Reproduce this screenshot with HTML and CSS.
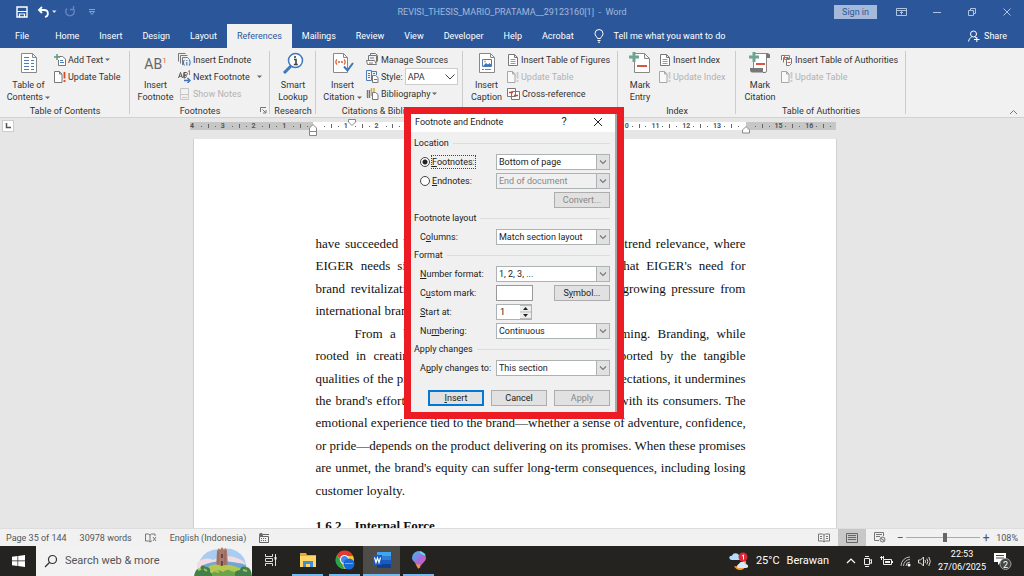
FILE: index.html
```html
<!DOCTYPE html>
<html lang="en">
<head>
<meta charset="utf-8">
<title>REVISI_THESIS_MARIO_PRATAMA__29123160[1] - Word</title>
<link rel="stylesheet" href="styles.css">
</head>
<body>
<svg class="defs" aria-hidden="true">
  <symbol id="page" viewBox="0 0 12 12"><path d="M1.5.5h6l3 3v8h-9zM7.500.5v3h3" fill="#fff" stroke="#777"/><path d="M3.500 5.500h5M3.500 7.500h5M3.500 9.500h5" stroke="#999"/></symbol>
  <symbol id="update" viewBox="0 0 12 12"><path d="M.5.5h5l2.500 2.500v8.500H.5zM5.500.5V3h2.500" fill="#fff" stroke="#777"/><path d="M10.500 1v6.500M10.500 9v2" stroke="currentColor" stroke-width="1.800"/></symbol>
  <symbol id="caret" viewBox="0 0 5 5"><path d="M0 1.500h5L2.500 4z" fill="#666"/></symbol>
  <symbol id="chev" viewBox="0 0 12 12"><path d="M3 4.500l3 3 3-3" fill="none" stroke="#777" stroke-width="1.100"/></symbol>
</svg>
<div class="app">
  <header class="titlebar">
    <div class="quick">
      <button aria-label="Save"><svg width="12" height="12" viewBox="0 0 12 12"><path d="M1 1h10v10H1z" fill="none" stroke="#fff" stroke-width="1.400"/><path d="M1 5.500h10M3.500 11V8h5v3" fill="none" stroke="#fff" stroke-width="1.200"/></svg></button>
      <button aria-label="Undo"><svg width="20" height="12" viewBox="0 0 20 12"><path d="M5 1L2 4l3 3M2 4h5c5 0 5 6 1 7" fill="none" stroke="#fff" stroke-width="1.800"/><path d="M15 4.500h4.500L17.200 7z" fill="#dce6f4"/></svg></button>
      <button aria-label="Repeat"><svg width="12" height="12" viewBox="0 0 12 12"><path d="M3 2.500a4.300 4.300 0 1 0 6 0M9.500 0v3.500H6" fill="none" stroke="#6486bd" stroke-width="1.400"/></svg></button>
      <button aria-label="Customize toolbar"><svg width="8" height="8" viewBox="0 0 8 8"><path d="M1 1.500h6M1.500 3.500h5L4 6.500z" fill="none" stroke="#87a2ce"/></svg></button>
    </div>
    <div class="doc-title">REVISI_THESIS_MARIO_PRATAMA__29123160[1]&nbsp; -&nbsp; Word</div>
    <div class="window-tools">
      <button class="signin">Sign in</button>
      <button aria-label="Ribbon display"><svg width="11" height="10" viewBox="0 0 11 10"><path d="M.5 1.500h10v7H.5zM.5 3.500h10M5.500 7.500V4.500M4 6l1.500-1.500L7 6" fill="none" stroke="#b0c3e2"/></svg></button>
      <button aria-label="Minimize"><svg width="10" height="10" viewBox="0 0 10 10"><path d="M1 5.500h8" stroke="#b0c3e2"/></svg></button>
      <button aria-label="Restore"><svg width="10" height="10" viewBox="0 0 10 10"><path d="M1.500 3.500h5v5h-5zM3.500 3V1.500h5v5H7" fill="none" stroke="#b0c3e2"/></svg></button>
      <button aria-label="Close"><svg width="10" height="10" viewBox="0 0 10 10"><path d="M1.500 1.500l7 7M8.500 1.500l-7 7" stroke="#b0c3e2"/></svg></button>
    </div>
  </header>
  <nav class="tabs">
    <a href="#" class="file">File</a><a href="#">Home</a><a href="#">Insert</a><a href="#">Design</a><a href="#">Layout</a><a href="#" class="active">References</a><a href="#">Mailings</a><a href="#">Review</a><a href="#">View</a><a href="#">Developer</a><a href="#">Help</a><a href="#">Acrobat</a>
    <a href="#" class="tell"><svg width="10" height="14" viewBox="0 0 10 14"><path d="M3.500 9.500C3 7.500 1 7 1 4.500a4 4 0 0 1 8 0C9 7 7 7.500 6.500 9.500zM3.500 11.500h3M4 13.200h2" fill="none" stroke="#fff"/></svg>Tell me what you want to do</a>
    <a href="#" class="share"><svg width="12" height="12" viewBox="0 0 12 12"><circle cx="5.500" cy="4" r="3" fill="none" stroke="#fff"/><path d="M.5 11.500C1 9 2 8 3.500 7M7 7l2 1.500M6 9.500h5.500M8.800 7v5" fill="none" stroke="#fff"/></svg>Share</a>
  </nav>
  <div class="ribbon">
    <section class="group g-toc">
      <div class="tools">
        <button class="big"><svg width="18" height="22" viewBox="0 0 18 22"><path d="M1.500 1.500h11l4 4v15h-15zM12.500 1.500v4h4" fill="#fff" stroke="#888"/><path d="M4 5.500h5M4 8.500h5M4 11.500h5M4 14.500h5M4 17.500h5" stroke="#4a7ebb"/><path d="M11 8.500h3M11 11.500h3M11 14.500h3M11 17.500h3" stroke="#4a7ebb"/></svg><span>Table of<br>Contents <svg class="caret"><use href="#caret"/></svg></span></button>
        <div class="stack">
          <button><svg width="12" height="12" viewBox="0 0 12 12"><path d="M4.500 3V2.500h4l3 2.500v6.500h-7V6" fill="#fff" stroke="#777"/><path d="M3 0v6M0 3h6" stroke="#5a9a82" stroke-width="1.500"/><path d="M6 6.500h3M6 8.500h4" stroke="#4a7ebb"/></svg>Add Text <svg class="caret"><use href="#caret"/></svg></button>
          <button><svg class="ic red"><use href="#update"/></svg>Update Table</button>
        </div>
      </div>
      <h2>Table of Contents</h2>
    </section>
    <section class="group g-foot">
      <div class="tools">
        <button class="big"><span class="ab">AB<sup>1</sup></span><span>Insert<br>Footnote</span></button>
        <div class="stack">
          <button><svg width="13" height="13" viewBox="0 0 13 13"><path d="M.5 8.500v-8h7M2.500 10.500v-8h7M4.500 12V4.500h5l2 2" fill="none" stroke="#777"/><path d="M6.500 7C5 8 5 11 6.500 12.500M11 7c1.500 1 1.500 4 0 5.500M8.800 9v3.500M8.800 7v1" fill="none" stroke="#4a7ebb" stroke-width="1.200"/></svg>Insert Endnote</button>
          <button><svg width="13" height="13" viewBox="0 0 13 13"><path d="M.5 8l2-5.500 2 5.500M1.200 6.200h2.600M6 2.500h2c2 0 2 2.500 0 2.500H6c3 0 3 3 0 3zV8" fill="none" stroke="#555"/><path d="M10 1.500l1.500-1V5" fill="none" stroke="#dc6a32"/><path d="M6 10.500h5M9.500 8l2.500 2.500L9.500 13" fill="none" stroke="#3c73b9" stroke-width="1.400"/></svg>Next Footnote <svg class="caret far"><use href="#caret"/></svg></button>
          <button disabled><svg width="13" height="12" viewBox="0 0 13 12"><path d="M2.500.5h8v11h-8zM2.500 6.500h8M4 9.500h5" fill="none" stroke="#aaa"/></svg>Show Notes</button>
        </div>
      </div>
      <h2>Footnotes</h2>
      <button class="launcher" aria-label="Footnote and Endnote settings"><svg width="7" height="7" viewBox="0 0 7 7"><path d="M.5 5V.5H6M2.500 2.500l3 3M6 3v3H3" fill="none" stroke="#777"/></svg></button>
    </section>
    <section class="group g-res">
      <div class="tools">
        <button class="big"><svg width="22" height="22" viewBox="0 0 22 22"><path d="M9 14l-7 7" stroke="#3f78bd" stroke-width="3"/><circle cx="13.500" cy="8.500" r="7" fill="#fff" stroke="#3f78bd" stroke-width="1.500"/><path d="M12 7.500h2v5M11.800 12.500h4M13 4v2" fill="none" stroke="#444" stroke-width="1.600"/></svg><span>Smart<br>Lookup</span></button>
      </div>
      <h2>Research</h2>
    </section>
    <section class="group g-cit">
      <div class="tools">
        <button class="big"><svg width="22" height="22" viewBox="0 0 22 22"><path d="M1.500 1.500h10l4 4v15h-14zM11.500 1.500v4h4" fill="#fff" stroke="#888"/><path d="M5 7.500c-1.500 1-1.500 4 0 5M12 7.500c1.500 1 1.500 4 0 5M6 10h2M9 10h2" fill="none" stroke="#dc5a32" stroke-width="1.300"/><path d="M12 14.500l3.500 4L21 11" fill="none" stroke="#3c73b9" stroke-width="2"/></svg><span>Insert<br>Citation <svg class="caret"><use href="#caret"/></svg></span></button>
        <div class="stack">
          <button><svg width="13" height="13" viewBox="0 0 13 13"><path d="M2.500 7V2.500h8v7M4.500 2V.5h5l2 2v6" fill="none" stroke="#777"/><path d="M.5 7.500h8l2 4h-9zM4 5h4" fill="#fff" stroke="#777"/><path d="M3 10h4" stroke="#777"/></svg>Manage Sources</button>
          <div class="style-row"><label for="style"><svg width="13" height="13" viewBox="0 0 13 13"><path d="M.5.5h5v10h-5zM5.500 1.500h5V5" fill="none" stroke="#4a7ebb"/><path d="M2 3.500h2M2 5.500h2M2 7.500h2M7 3.500h2" stroke="#4a7ebb"/><path d="M6.500 5.500h3l2.500 2v5H6.500z" fill="#fff" stroke="#777"/><path d="M8 9.500h3" stroke="#4a7ebb"/></svg>Style:</label><span class="combo"><select id="style"><option>APA</option></select><svg viewBox="0 0 14 14"><path d="M2.500 4.500L7 9l4.500-4.500" fill="none" stroke="#444"/></svg></span></div>
          <button><svg width="13" height="13" viewBox="0 0 13 13"><path d="M1.500 3v8M3.500 3v8" stroke="#777" stroke-width="1.400"/><path d="M5.500 1v8M8 1v4" stroke="#d9ad57" stroke-width="1.600"/><path d="M6.500 5.500h3l2.500 2v5H6.500z" fill="#fff" stroke="#777"/></svg>Bibliography <svg class="caret"><use href="#caret"/></svg></button>
        </div>
      </div>
      <h2>Citations &amp; Bibliography</h2>
    </section>
    <section class="group g-cap">
      <div class="tools">
        <button class="big"><svg width="18" height="22" viewBox="0 0 18 22"><path d="M1.500 1.500h11l4 4v15h-15zM12.500 1.500v4h4" fill="#fff" stroke="#888"/><path d="M4.500 7.500h9v7h-9z" fill="#fff" stroke="#4a7ebb"/><path d="M5 14l3-3 2 1.500 1.500-1.500 2 2v1z" fill="#3c73b9"/><circle cx="7" cy="9.500" r="1" fill="#e8a33d"/><path d="M4 17.500h2M7 17.500h6" stroke="#dc5a46"/></svg><span>Insert<br>Caption</span></button>
        <div class="stack">
          <button><svg class="ic"><use href="#page"/></svg>Insert Table of Figures</button>
          <button disabled><svg class="ic"><use href="#update"/></svg>Update Table</button>
          <button><svg width="13" height="12" viewBox="0 0 13 12"><path d="M.5.5h8v8h-8zM4.500 3.500h8v8h-8z" fill="#fff" stroke="#777"/><path d="M2 4.500h4M7 7.500h4" stroke="#d8412c" stroke-width="1.600"/></svg>Cross-reference</button>
        </div>
      </div>
      <h2>Captions</h2>
    </section>
    <section class="group g-idx">
      <div class="tools">
        <button class="big"><svg width="22" height="22" viewBox="0 0 22 22"><path d="M5.500 1.500h10l5 5v14h-15zM15.500 1.500v5h5" fill="#fff" stroke="#888"/><path d="M8 14h10" stroke="#d8553f" stroke-width="2"/><path d="M5 0v10M0 5h10" stroke="#6ea592" stroke-width="3"/></svg><span>Mark<br>Entry</span></button>
        <div class="stack">
          <button><svg class="ic"><use href="#page"/></svg>Insert Index</button>
          <button disabled><svg class="ic"><use href="#update"/></svg>Update Index</button>
        </div>
      </div>
      <h2>Index</h2>
    </section>
    <section class="group g-auth">
      <div class="tools">
        <button class="big"><svg width="22" height="22" viewBox="0 0 22 22"><path d="M5 2h13v17H5z" fill="#fff"/><path d="M4.500 16V1.500H19M17.500 2v17" fill="none" stroke="#888"/><path d="M17 6V3c0-2 4-2 4 0v3zM1 16h13v4.500H3c-2 0-2-3-2-4.500z" fill="#777"/><path d="M14 20.500h2c1.500 0 1.500-1 1.500-2" stroke="#777" fill="none"/><path d="M7 12h9" stroke="#d8553f" stroke-width="2"/><path d="M5 0v10M0 5h10" stroke="#6ea592" stroke-width="3"/></svg><span>Mark<br>Citation</span></button>
        <div class="stack">
          <button><svg width="12" height="12" viewBox="0 0 12 12"><path d="M.5 6V1.500h7M2.500 8.500v-5h5M5.500 4.500h5v5l-2 2h-3z" fill="#fff" stroke="#777"/><path d="M3.500 1.500h5v4h-5zM6.500 8.500h3" fill="none" stroke="#c96a4e"/></svg>Insert Table of Authorities</button>
          <button disabled><svg class="ic"><use href="#update"/></svg>Update Table</button>
        </div>
      </div>
      <h2>Table of Authorities</h2>
    </section>
    <button class="collapse" aria-label="Collapse the ribbon"><svg width="9" height="6" viewBox="0 0 9 6"><path d="M1 5l3.500-3.500L8 5" fill="none" stroke="#777"/></svg></button>
  </div>
  <div class="ruler-bar">
    <button class="tab-stop" aria-label="Left tab"><svg width="6" height="6" viewBox="0 0 6 6"><path d="M1.500 0v4.500H6" fill="none" stroke="#555" stroke-width="1.500"/></svg></button>
    <div class="ruler">
      <div><b>4</b><i></i><s></s><i></i></div><div><b>3</b><i></i><s></s><i></i></div><div><b>2</b><i></i><s></s><i></i></div><div><b>1</b><i></i><s></s><i></i></div><div><b></b><i></i><s></s><i></i></div><div><b>1</b><i></i><s></s><i></i></div><div><b>2</b><i></i><s></s><i></i></div><div><b>3</b><i></i><s></s><i></i></div><div><b>4</b><i></i><s></s><i></i></div><div><b>5</b><i></i><s></s><i></i></div><div><b>6</b><i></i><s></s><i></i></div><div><b>7</b><i></i><s></s><i></i></div><div><b>8</b><i></i><s></s><i></i></div><div><b>9</b><i></i><s></s><i></i></div><div><b>10</b><i></i><s></s><i></i></div><div><b>11</b><i></i><s></s><i></i></div><div><b>12</b><i></i><s></s><i></i></div><div><b>13</b><i></i><s></s><i></i></div><div><b></b><i></i><s></s><i></i></div><div><b>15</b><i></i><s></s><i></i></div><div><b>16</b><i></i><s></s><i></i></div>
      <svg class="mark first" viewBox="0 0 8 8"><path d="M.5.5h7V3L4 6.500.5 3z" fill="#fff" stroke="#888"/></svg>
      <svg class="mark left" viewBox="0 0 8 12"><path d="M4 .5L7.500 4v7.500h-7V4zM.5 7.500h7" fill="#fff" stroke="#888"/></svg>
      <svg class="mark right" viewBox="0 0 8 8"><path d="M4 .5L7.500 4v3h-7V4z" fill="#fff" stroke="#888"/></svg>
    </div>
  </div>
  <main class="desk">
    <article class="sheet">
      <p>
        <span>have succeeded by combining their functional value and trend relevance, where</span>
        <span>EIGER needs significant improvement. This suggests that EIGER's need for</span>
        <span>brand revitalization is becoming urgent amid all of the growing pressure from</span>
        <span class="last">international brands that now enter the local industry.</span>
      </p>
      <p>
        <span class="indent">From a branding perspective, this is truly alarming. Branding, while</span>
        <span>rooted in creating emotional connection, must be supported by the tangible</span>
        <span>qualities of the product. If the quality fails to meet the expectations, it undermines</span>
        <span>the brand's efforts to build deep and lasting relationships with its consumers. The</span>
        <span>emotional experience tied to the brand—whether a sense of adventure, confidence,</span>
        <span>or pride—depends on the product delivering on its promises. When these promises</span>
        <span>are unmet, the brand's equity can suffer long-term consequences, including losing</span>
        <span class="last">customer loyalty.</span>
      </p>
      <h1><span>1.6.2</span>Internal Force</h1>
    </article>
  </main>
  <footer class="status">
    <span>Page 35 of 144</span><span>30978 words</span>
    <svg width="12" height="10" viewBox="0 0 12 10"><path d="M.5 1h3L5 2v7L3.500 8h-3zM5 2l1.500-1H10v2M5 9l1.500-1H7M8 4l3 4M11 4L8 8" fill="none" stroke="#777"/></svg>
    <span>English (Indonesia)</span>
    <svg width="10" height="10" viewBox="0 0 10 10"><path d="M.5 3.500h9v6h-9zM4 1.500h6" fill="none" stroke="#666"/><circle cx="2" cy="2" r="2" fill="#666"/><path d="M2 5.500h6M2 7.500h6" stroke="#666" stroke-dasharray="1 1"/></svg>
    <div class="views">
      <button aria-label="Read mode"><svg width="12" height="10" viewBox="0 0 12 10"><path d="M.5 1h4L6 2v7L4.500 8h-4zM6 2l1.500-1h4v7h-4L6 9M2 3.500h2M2 5.500h2M8 3.500h2M8 5.500h2" fill="none" stroke="#777"/></svg></button>
      <button class="on" aria-label="Print layout"><svg width="12" height="10" viewBox="0 0 12 10"><path d="M.5.5h11v9H.5zM2 2.500h8M2 4.500h8M2 6.500h8" fill="none" stroke="#666"/></svg></button>
      <button aria-label="Web layout"><svg width="12" height="11" viewBox="0 0 12 11"><path d="M5 8.500H.5v-8h9V4M2 2.500h6M2 4.500h4" fill="none" stroke="#777"/><circle cx="8.500" cy="7.500" r="2.500" fill="#ddd" stroke="#777"/><path d="M6.500 6l4 3" stroke="#777"/></svg></button>
      <button class="zoom-step" aria-label="Zoom out">−</button>
      <input type="range" aria-label="Zoom" min="0" max="200" value="104">
      <button class="zoom-step" aria-label="Zoom in">+</button>
      <span class="percent">108%</span>
    </div>
  </footer>
  <div class="taskbar">
    <button class="start" aria-label="Start"><svg width="13" height="12" viewBox="0 0 13 12"><path d="M0 1.800L5.500 1v4.600H0zM6.200.9L13 0v5.600H6.200zM0 6.300h5.500V11L0 10.200zM6.200 6.300H13V12l-6.800-.9z" fill="#fff"/></svg></button>
    <label class="search">
      <svg width="14" height="14" viewBox="0 0 14 14"><circle cx="8.500" cy="5.500" r="4" fill="none" stroke="#333" stroke-width="1.200"/><path d="M5.700 8.300L1 13" stroke="#333" stroke-width="1.300"/></svg>
      <input type="text" placeholder="Search web &amp; more" aria-label="Search web &amp; more">
      <svg class="scene" width="58" height="30" viewBox="0 0 58 30"><path d="M6 14Q12 3 26 3q16-3 24 9l4 12H3z" fill="#a9cdf0"/><path d="M3 17q8-7 16-3 16-8 30 1l4 5v6H3z" fill="#f4dbe1"/><path d="M7 20q18-9 45-1v7H7z" fill="#6ba8d4"/><path d="M22 22L23 5l2-3 1 2 2-3 2 3 1-2 2 2 1 18z" fill="#aa7968"/><path d="M24 5v15M31 5v17" stroke="#8d665c"/><path d="M27 8h2v4h-2zM27 15h2v7h-2z" fill="#67434b"/><path d="M12 23q7-7 15-3 9-3 20 3l5 6H10z" fill="#b8c84f"/><path d="M0 30q2-9 6-7 1-6 6-2 5 0 4 5l5 4zM58 30q-1-9-6-9-5-2-6 3-5 0-8 6z" fill="#437f4b"/><path d="M18 27q6-5 11-1 6-5 12 1v3H18z" fill="#6ca24a"/><path d="M4 24l3-1M10 23l3 2M49 24l4 1M21 25l4 1M36 24l5 1" stroke="#9ec45d" stroke-width="2"/></svg>
    </label>
    <button class="app-btn plain" aria-label="Task view"><svg width="14" height="14" viewBox="0 0 14 14"><path d="M1.500 1v2.500h7V1M1.500 13v-2.500h7V13M1.500 5.500h7v3h-7zM11.500 1v12" fill="none" stroke="#ddd"/><path d="M10.500 4h2v2.500h-2z" fill="#fff"/></svg></button>
    <button class="app-btn" aria-label="File Explorer"><svg width="18" height="16" viewBox="0 0 18 16"><path d="M1 1h6l1 2h9v12H1z" fill="#e8a92e"/><path d="M1 4h16v11H1z" fill="#ffd566"/><path d="M4 15V9h10v6h-3v-3H7v3z" fill="#3f8fd2"/></svg></button>
    <button class="app-btn" aria-label="Chrome"><svg width="20" height="20" viewBox="0 0 20 20"><circle cx="10" cy="10" r="9" fill="#f7c52c"/><path d="M2 5a9 9 0 0 1 16 1h-8L6 11z" fill="#e33c2e"/><path d="M2 5l4.500 8 3 6A9 9 0 0 1 2 5z" fill="#2ba24c"/><circle cx="9.500" cy="9.500" r="4.500" fill="#fff"/><circle cx="9.500" cy="9.500" r="3.500" fill="#4285f4"/><circle cx="14" cy="14" r="5.500" fill="#1769d8"/><path d="M10 13.500h8" stroke="#7da9e8"/></svg></button>
    <button class="app-btn current" aria-label="Word"><svg width="20" height="18" viewBox="0 0 20 18"><path d="M5 1h14v4H5z" fill="#41a5ee"/><path d="M5 5h14v4H5z" fill="#2b7cd3"/><path d="M5 9h14v4H5z" fill="#185abd"/><path d="M5 13h14v4H5z" fill="#103f91"/><path d="M1 4h9v10H1z" fill="#185abd"/><path d="M2.500 6.500l1.500 5 1.500-4.500L7 11.500l1.500-5" fill="none" stroke="#fff" stroke-width="1.200"/></svg></button>
    <button class="app-btn" aria-label="Paint"><svg width="16" height="20" viewBox="0 0 16 20"><defs><linearGradient id="pin" x1="0" y1="0" x2="1" y2="1"><stop offset="0" stop-color="#26c9ef"/><stop offset=".5" stop-color="#a56be0"/><stop offset="1" stop-color="#f0567b"/></linearGradient></defs><path d="M8 1a7 7 0 0 1 7 7c0 4-5 5-6 10H7c0-5-6-6-6-10a7 7 0 0 1 7-7z" fill="url(#pin)"/><path d="M4 13l3 2 2-1-1 4.500H7z" fill="#f59b3c"/><path d="M9 2l5 3" stroke="#58e4e1" stroke-width="2"/></svg></button>
    <div class="tray">
      <svg width="20" height="18" viewBox="0 0 20 18"><path d="M5 14a7 7 0 0 0 9-8c6 4 3 12-3 12-3 0-5-2-6-4z" fill="#f59c2f"/><path d="M3 8C-1 8 0 3 3 4c1-4 7-3 7 0 3 0 2 4 0 4z" fill="#b8dcfb"/><path d="M10 16c-3 0-2-4 0-4 1-3 6-3 6 0 4 0 4 4 1 4z" fill="#d7eaff"/><circle cx="14" cy="5" r="4.500" fill="#d92b35"/><path d="M13 4l1.500-1v4.500" fill="none" stroke="#fff"/></svg>
      <span class="weather">25°C</span><span class="weather city">Berawan</span>
      <svg width="10" height="8" viewBox="0 0 10 8"><path d="M1 6l4-4 4 4" fill="none" stroke="#fff" stroke-width="1.200"/></svg>
      <svg width="10" height="13" viewBox="0 0 10 13"><path d="M1.500 3.500h5v6h-5zM6.500 5.500l2-1v4l-2-1M2 1.500h4M2 11.500h4" fill="none" stroke="#eee"/></svg>
      <svg width="13" height="11" viewBox="0 0 13 11"><path d="M3.500 3.500h8v5h-8zM0 1.500h4M1.500 0v4M3.500 0v3" fill="none" stroke="#eee"/><path d="M5 5h5v2H5zM12 5h1v2h-1z" fill="#eee"/></svg>
      <svg width="11" height="11" viewBox="0 0 11 11"><path d="M1 10A9 9 0 0 1 10 1M3.500 10A6.500 6.500 0 0 1 10 3.500M6 10a4 4 0 0 1 4-4" fill="none" stroke="#bbb"/><circle cx="9" cy="9" r="1.500" fill="#fff"/></svg>
      <svg width="13" height="11" viewBox="0 0 13 11"><path d="M.5 4h2L5.500 1v9l-3-3h-2zM7 4q1 1.500 0 3M8.800 2.500q2 3 0 6M10.800 1q3 4.500 0 9" fill="none" stroke="#ddd"/></svg>
      <time>22:53<br>27/06/2025</time>
      <svg class="notice" width="20" height="20" viewBox="0 0 20 20"><path d="M1 2h12v9H8l-3 3v-3H1z" fill="#fff"/><path d="M3 4.500h8M3 7h8" stroke="#444"/><circle cx="12.500" cy="13" r="5.500" fill="#444" stroke="#999"/><text x="12.500" y="16.500" text-anchor="middle">2</text></svg>
    </div>
  </div>

  <form class="dialog" role="dialog" aria-label="Footnote and Endnote">
    <div class="dialog-title"><span>Footnote and Endnote</span><button type="button" class="help">?</button><button type="button" aria-label="Close"><svg width="10" height="10" viewBox="0 0 10 10"><path d="M1 1l8 8M9 1L1 9" stroke="#222"/></svg></button></div>
    <div class="dialog-body">
      <h3>Location</h3>
      <div class="row"><span class="choice"><input type="radio" name="kind" id="foot" checked><label for="foot" class="focus"><u>F</u>ootnotes:</label></span><span class="drop"><select aria-label="Footnote location"><option>Bottom of page</option></select><svg><use href="#chev"/></svg></span></div>
      <div class="row"><span class="choice"><input type="radio" name="kind" id="end"><label for="end"><u>E</u>ndnotes:</label></span><span class="drop off"><select aria-label="Endnote location" disabled><option>End of document</option></select><svg><use href="#chev"/></svg></span></div>
      <div class="row"><button type="button" class="btn" disabled>Convert...</button></div>
      <h3>Footnote layout</h3>
      <div class="row"><label for="cols">C<u>o</u>lumns:</label><span class="drop"><select id="cols"><option>Match section layout</option></select><svg><use href="#chev"/></svg></span></div>
      <h3>Format</h3>
      <div class="row"><label for="numf"><u>N</u>umber format:</label><span class="drop"><select id="numf"><option>1, 2, 3, ...</option></select><svg><use href="#chev"/></svg></span></div>
      <div class="row"><label for="mark">C<u>u</u>stom mark:</label><input type="text" id="mark" class="box"><button type="button" class="btn">S<u>y</u>mbol...</button></div>
      <div class="row"><label for="start"><u>S</u>tart at:</label><span class="spin"><input type="text" id="start" value="1"><svg viewBox="0 0 11 14"><path d="M0 .5h11M0 7h11M0 13.500h11" stroke="#bbb"/><path d="M3 5l2.500-3L8 5zM3 9l2.500 3L8 9z" fill="#222"/></svg></span></div>
      <div class="row"><label for="numb">Nu<u>m</u>bering:</label><span class="drop"><select id="numb"><option>Continuous</option></select><svg><use href="#chev"/></svg></span></div>
      <h3>Apply changes</h3>
      <div class="row"><label for="appl">A<u>p</u>ply changes to:</label><span class="drop"><select id="appl"><option>This section</option></select><svg><use href="#chev"/></svg></span></div>
      <div class="actions"><button type="button" class="btn primary"><u>I</u>nsert</button><button type="button" class="btn">Cancel</button><button type="button" class="btn" disabled>Apply</button></div>
    </div>
  </form>
</div>
</body>
</html>
```
FILE: styles.css
```css
* { box-sizing: border-box; }
body { margin: 0; font: 9px/12px Roboto, "Open Sans", sans-serif; color: #333; }
button, input, select { font: inherit; color: inherit; margin: 0; padding: 0; border: 0; background: none; border-radius: 0; }
button { display: flex; align-items: center; justify-content: center; white-space: nowrap; }
svg { flex: none; }
a { color: inherit; text-decoration: none; }
h1, h2, h3, p { margin: 0; }
.defs { position: absolute; width: 0; height: 0; }
.app { position: relative; display: flex; flex-direction: column; height: 100vh; overflow: hidden; background: #e6e6e6; }

.titlebar { display: grid; grid-template-columns: 1fr auto 1fr; align-items: center; height: 24px; background: #2b579a; }
.quick { display: flex; align-items: center; gap: 9px; padding-left: 16px; }
.quick button:last-child { margin-left: 3px; }
.quick button:nth-child(3) { margin-left: -2px; }
.doc-title { color: #a3b8da; }
.window-tools { display: flex; justify-content: flex-end; align-items: center; gap: 25px; padding-right: 12px; }
.signin { height: 14px; padding: 0 8px; background: #a5b9da; color: #2b579a; margin-right: -6px; }

.tabs { display: flex; height: 24px; background: #2b579a; color: #fff; }
.tabs a { display: flex; align-items: center; padding: 0 10px; white-space: nowrap; }
.tabs .file { padding: 0 16px 0 15px; }
.tabs .active { background: #f1f1f1; color: #2b579a; }
.tabs .tell { gap: 10px; }
.tabs .share { margin-left: auto; gap: 4px; padding-right: 17px; }

.ribbon { position: relative; display: flex; height: 70px; background: #f1f1f1; border-bottom: 1px solid #d2d2d2; }
.group { position: relative; display: flex; flex-direction: column; justify-content: space-between; padding-top: 3px; }
.group::after { content: ""; position: absolute; right: 0; top: 3px; bottom: 3px; width: 1px; background: #ccc; }
.group h2 { font-size: 9px; font-weight: 400; text-align: center; white-space: nowrap; }
.tools { display: flex; height: 52px; padding-left: 3px; }
.big { flex-direction: column; justify-content: space-between; height: 52px; }
.big > svg { margin-top: 1px; }
.big .ab { font-size: 14px; line-height: 22px; padding-top: 2px; color: #666; }
.ab sup { color: #dc6a32; font-size: 8px; line-height: 8px; }
.stack { display: flex; flex-direction: column; align-items: flex-start; }
.stack button, .style-row { height: 17px; gap: 2px; }
.stack button { color: #333; }
.stack button:disabled { color: #b1b1b1; }
.stack button:disabled svg { opacity: .6; }
.ic { width: 12px; height: 12px; }
.red { color: #dc4a2c; }
.caret { width: 5px; height: 5px; vertical-align: middle; }
.far { margin-left: 5px; }
.g-toc { width: 130px; }
.g-toc .big { width: 51px; }
.g-foot { width: 140px; }
.g-foot .big { width: 45px; }
.g-res { width: 46px; }
.g-res .big { width: 40px; }
.g-cit { width: 147px; }
.g-cit .big { width: 47px; }
.g-cap { width: 155px; }
.g-cap .big { width: 41px; }
.g-idx { width: 118px; }
.g-idx .big { width: 38px; }
.g-auth { width: 170px; }
.g-auth .big { width: 42px; }
.launcher { position: absolute; right: 3px; bottom: 3px; }
.style-row { display: flex; align-items: center; }
.style-row label { display: flex; align-items: center; gap: 2px; }
.combo { position: relative; display: flex; width: 53px; height: 17px; background: #fff; border: 1px solid #ccc; }
.combo select { appearance: none; width: 100%; padding-left: 2px; }
.combo svg { position: absolute; right: 0; top: 1px; width: 14px; height: 14px; pointer-events: none; }
.collapse { position: absolute; right: 6px; bottom: 2px; }

.ruler-bar { display: flex; justify-content: center; height: 21px; position: relative; padding: 4px 0 0 2px; }
.tab-stop { position: absolute; left: 2px; top: 2px; width: 12px; height: 12px; background: #fff; border: 1px solid #ccc; }
.ruler { position: relative; display: flex; width: 646px; height: 8px; background: linear-gradient(90deg, #c6c6c6 19%, #fff 19%, #fff 86%, #c6c6c6 86%); }
.ruler div { display: flex; flex: 1; align-items: center; justify-content: space-between; padding-right: 5px; font-size: 7px; line-height: 8px; color: #555; }
.ruler b { width: 5px; }
.ruler i { width: 1px; height: 1px; background: #666; }
.ruler s { width: 1px; height: 4px; background: #666; }
.mark { position: absolute; width: 8px; height: 8px; margin-left: -4px; }
.first { left: 25%; top: -3px; }
.left { left: 19%; top: 2px; height: 12px; }
.right { left: 86%; top: 4px; }

.desk { flex: 1; min-height: 0; display: flex; justify-content: center; padding-left: 5px; overflow: hidden; border-bottom: 1px solid #ddd; }
.sheet { width: 644px; padding: 94px 90px 0 122px; background: #fff; border: 1px solid #d0d0d0; border-width: 0 1px; font: 13px/1.725 "Liberation Serif", serif; color: #111; }
.sheet p span { display: block; white-space: nowrap; text-align: justify; text-align-last: justify; }
.sheet p .last { text-align-last: left; }
.sheet p .indent { padding-left: 39px; }
.sheet h1 { margin-top: 13px; font-size: 13px; }
.sheet h1 span { margin-right: 13px; }

.status { display: flex; align-items: center; gap: 13px; height: 17px; padding-left: 6px; background: #f1f1f1; color: #555; }
.views { display: flex; align-items: center; height: 17px; margin-left: auto; padding-right: 6px; }
.views button { width: 28px; height: 17px; }
.views .on { background: #c8c8c8; }
.views .zoom-step { width: 12px; font-size: 12px; }
.views input { appearance: none; width: 74px; height: 1px; background: #aaa; }
.views input::-webkit-slider-thumb { appearance: none; width: 4px; height: 9px; background: #666; }
.percent { margin-left: 4px; }

.taskbar { display: flex; height: 30px; background: #25231f; color: #fff; }
.start { width: 36px; }
.search { display: flex; align-items: center; gap: 7px; width: 216px; padding-left: 8px; background: #f2f2f2; }
.search input { flex: 1; min-width: 0; font-size: 11px; outline: 0; }
.search input::placeholder { color: #555; opacity: 1; }
.app-btn { width: 31px; margin: 0 3px; border-bottom: 2px solid #76b9ed; }
.plain { border-color: transparent; }
.current { width: 37px; margin: 0; background: #4d4c49; }
.tray { display: flex; align-items: center; gap: 7px; margin-left: auto; padding-right: 11px; }
.weather { font-size: 11px; white-space: nowrap; }
.city { margin-right: 10px; }
.tray time { font-size: 9px; line-height: 13px; text-align: center; }
.notice text { fill: #fff; font-size: 9px; }

.dialog { position: absolute; left: 404px; top: 107px; width: 220px; border: 7px solid #ed1c24; background: #f0f0f0; color: #222; box-shadow: inset -2px 0 #aaa; }
.dialog-title { display: flex; align-items: center; height: 18px; margin-right: 2px; padding: 0 12px 2px 4px; background: #fff; }
.dialog-title span { flex: 1; }
.dialog-title button { width: 10px; }
.dialog-title .help { margin-right: 24px; font-size: 11px; }
.dialog-body { padding: 2px 7px 6px 3px; }
.dialog h3 { display: flex; align-items: center; gap: 4px; height: 18px; font-size: 9px; font-weight: 400; white-space: nowrap; }
.dialog h3::after { content: ""; flex: 1; height: 1px; background: #dcdcdc; }
.row { display: flex; align-items: center; justify-content: flex-end; height: 19px; padding-left: 6px; }
.row > label, .choice { flex: 1; white-space: nowrap; }
.choice { display: flex; align-items: center; gap: 2px; }
.choice input { appearance: none; width: 10px; height: 10px; border: 1px solid #444; border-radius: 50%; background: #fff; }
.choice input:checked { background: radial-gradient(circle, #222 0 2px, #fff 3px); }
.focus { outline: 1px dotted #444; }
.drop { position: relative; display: flex; width: 114px; height: 16px; background: #fff; border: 1px solid #adb2b5; }
.drop select { appearance: none; width: 100%; padding-left: 2px; opacity: 1; }
.drop svg { position: absolute; right: 0; top: 0; width: 13px; height: 14px; background: #e1e1e1; border-left: 1px solid #adb2b5; pointer-events: none; }
.off { background: #f0f0f0; color: #888; }
.box { width: 37px; height: 16px; background: #fff; border: 1px solid #999; margin-right: 21px; }
.spin { display: flex; width: 36px; height: 16px; margin-right: 78px; background: #fff; border: 1px solid #adb2b5; }
.spin input { flex: 1; min-width: 0; padding-left: 3px; }
.spin svg { width: 11px; height: 14px; background: #eee; }
.btn { width: 56px; height: 16px; background: #e1e1e1; border: 1px solid #adadad; }
.btn:disabled { color: #888; }
.actions { display: flex; justify-content: flex-end; gap: 7px; padding-top: 13px; }
.primary { border: 2px solid #0078d7; }
```
